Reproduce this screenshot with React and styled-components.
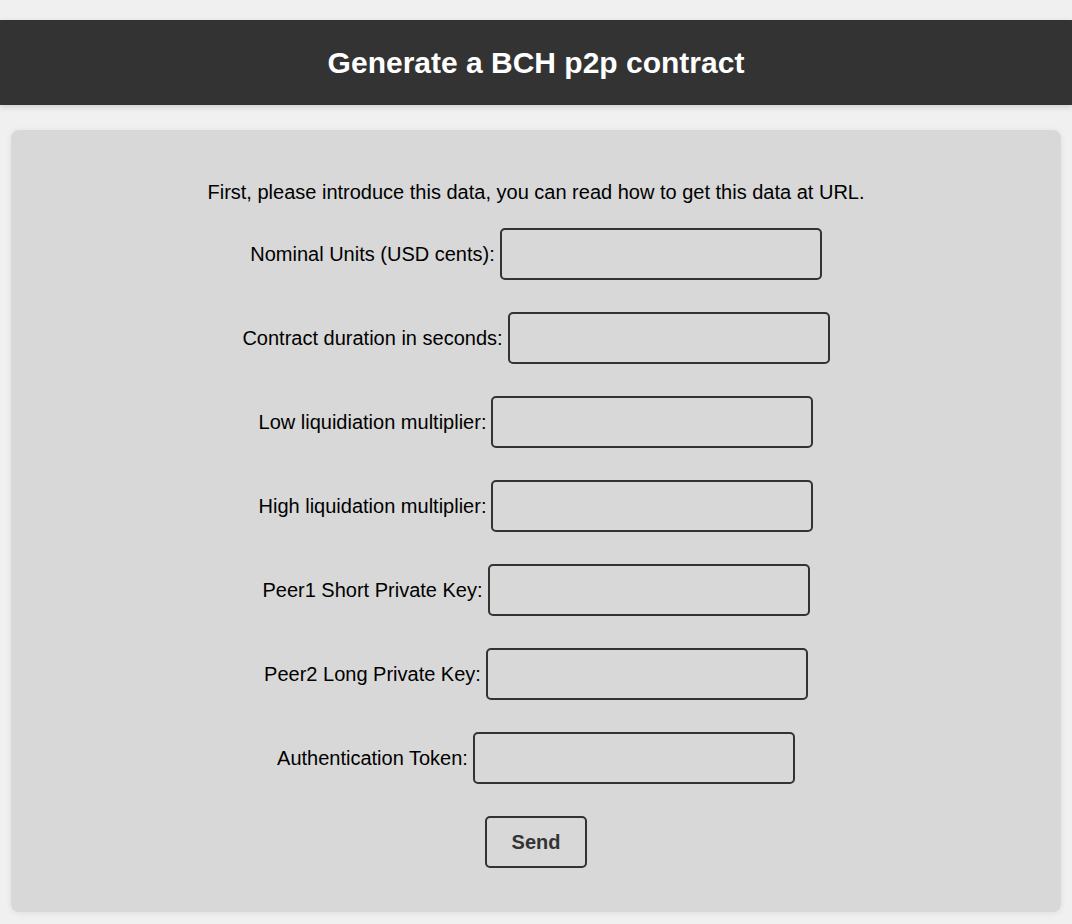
import styled, { createGlobalStyle } from "styled-components";

const fields = [
  "Nominal Units (USD cents):",
  "Contract duration in seconds:",
  "Low liquidiation multiplier:",
  "High liquidation multiplier:",
  "Peer1 Short Private Key:",
  "Peer2 Long Private Key:",
  "Authentication Token:",
];

export default function App() {
  return (
    <>
      <Global />
      <Header>
        <h1>Generate a BCH p2p contract</h1>
      </Header>
      <Card>
        <Intro>First, please introduce this data, you can read how to get this data at URL.</Intro>
        {fields.map((f) => (
          <Row key={f}>
            <label>{f}</label>
            <input type="text" />
          </Row>
        ))}
        <SendButton>Send</SendButton>
      </Card>
    </>
  );
}

const Global = createGlobalStyle`
  body {
    margin: 0;
    background: #f0f0f0;
    font-family: "Liberation Sans", Arial, sans-serif;
  }
`;

const Header = styled.header`
  margin-top: 20px;
  height: 85px;
  background-color: #333333;
  display: flex;
  align-items: center;
  justify-content: center;
  box-shadow: 0 2px 6px rgba(0, 0, 0, 0.15);
  h1 {
    margin: 0;
    color: #ffffff;
    font-size: 30px;
    font-weight: 700;
  }
`;

const Card = styled.main`
  margin: 25px 11px 12px 11px;
  padding: 51px 0 44px;
  background-color: #d8d8d8;
  border-radius: 8px;
  box-shadow: 0 1px 6px rgba(0, 0, 0, 0.08);
  display: flex;
  flex-direction: column;
  align-items: center;
`;

const Intro = styled.p`
  margin: 0 0 24px;
  font-size: 20px;
  line-height: 23px;
  color: #000;
`;

const Row = styled.div`
  display: flex;
  align-items: center;
  gap: 5px;
  margin-bottom: 32px;
  label {
    font-size: 20px;
    color: #000;
  }
  input {
    box-sizing: border-box;
    width: 322px;
    height: 52px;
    border: 2px solid #333;
    border-radius: 5px;
    background: transparent;
    font-size: 18px;
    padding: 6px;
  }
`;

const SendButton = styled.button`
  box-sizing: border-box;
  width: 102px;
  height: 52px;
  border: 2px solid #333;
  border-radius: 5px;
  background: transparent;
  color: #333;
  font-family: "Liberation Sans", Arial, sans-serif;
  font-size: 20px;
  font-weight: 700;
`;
